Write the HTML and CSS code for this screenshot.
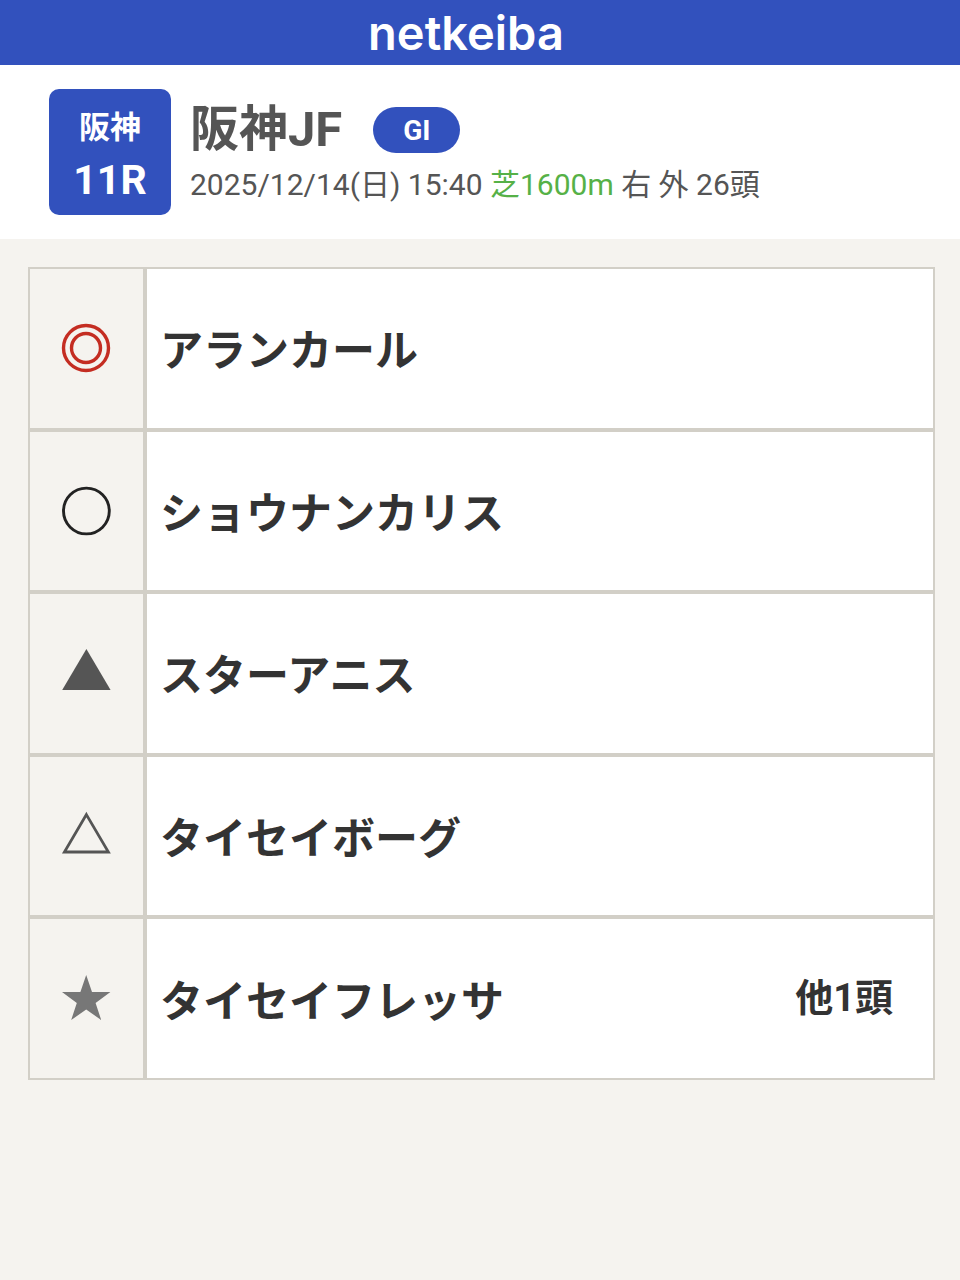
FILE: index.html
```html
<!DOCTYPE html>
<html lang="ja">
<head>
  <meta charset="UTF-8" />
  <meta name="viewport" content="width=device-width, initial-scale=1.0"/>
  <title>阪神JF | netkeiba</title>
  <link rel="stylesheet" href="styles.css">
</head>
<body>
  <header class="site-header">
    <div class="logo">netkeiba</div>
  </header>

  <section class="race">
    <div class="race-num">
      <span class="place">阪神</span>
      <span class="round">11R</span>
    </div>
    <div class="race-info">
      <div class="race-title">
        <h1>阪神JF</h1>
        <span class="grade">GI</span>
      </div>
      <p class="race-data">2025/12/14(日) 15:40 <span class="turf">芝1600m</span> 右 外 26頭</p>
    </div>
  </section>

  <main class="marks">
    <table class="mark-table">
      <tr>
        <th scope="row">
          <svg class="mark" viewBox="0 0 50 50" role="img" aria-label="本命">
            <circle cx="25" cy="25" r="22.5" fill="none" stroke="#c42d22" stroke-width="3.4"/>
            <circle cx="25" cy="25" r="14.5" fill="none" stroke="#c42d22" stroke-width="3.4"/>
          </svg>
        </th>
        <td><div class="horse"><span class="name">アランカール</span></div></td>
      </tr>
      <tr>
        <th scope="row">
          <svg class="mark" viewBox="0 0 50 50" role="img" aria-label="対抗">
            <circle cx="25.4" cy="25" r="22.9" fill="none" stroke="#222" stroke-width="2.9"/>
          </svg>
        </th>
        <td><div class="horse"><span class="name">ショウナンカリス</span></div></td>
      </tr>
      <tr>
        <th scope="row">
          <svg class="mark" viewBox="0 0 50 50" role="img" aria-label="単穴">
            <path d="M25.4 1L49.6 42H1.2Z" fill="#555"/>
          </svg>
        </th>
        <td><div class="horse"><span class="name">スターアニス</span></div></td>
      </tr>
      <tr>
        <th scope="row">
          <svg class="mark" viewBox="0 0 50 50" role="img" aria-label="連下">
            <path d="M25.4 3.6L47.4 41H3.4Z" fill="none" stroke="#555" stroke-width="2.8"/>
          </svg>
        </th>
        <td><div class="horse"><span class="name">タイセイボーグ</span></div></td>
      </tr>
      <tr>
        <th scope="row">
          <svg class="mark" viewBox="0 0 50 50" role="img" aria-label="星">
            <path d="M25.2 1L31 18H49.4L34.6 29L40.2 46L25.2 35.6L10.2 46L15.8 29L1 18H19.4Z" fill="#777"/>
          </svg>
        </th>
        <td>
          <div class="horse">
            <span class="name">タイセイフレッサ</span>
            <span class="others">他1頭</span>
          </div>
        </td>
      </tr>
    </table>
  </main>
</body>
</html>
```
FILE: styles.css
```css
* {
  box-sizing: border-box;
}
body {
  margin: 0;
  background: #f5f3ef;
  color: #333;
  font-family: Roboto, 'Noto Sans CJK JP', sans-serif;
}
.site-header {
  display: flex;
  align-items: center;
  justify-content: center;
  height: 65px;
  padding-right: 28px;
  background: #3251bd;
}
.logo {
  color: #fff;
  font-family: Inter, sans-serif;
  font-size: 47px;
  font-weight: 600;
  line-height: 65px;
}
.race {
  display: flex;
  gap: 19px;
  padding: 24px 49px;
  background: #fff;
  color: #555;
}
.race-num {
  display: flex;
  flex-direction: column;
  align-items: center;
  justify-content: center;
  width: 122px;
  height: 126px;
  padding-top: 4px;
  background: #3251bd;
  border-radius: 10px;
  color: #fff;
  font-weight: 700;
}
.place {
  font-size: 31px;
  line-height: 52px;
}
.round {
  font-size: 41px;
  line-height: 52px;
}
.race-info {
  padding-top: 9px;
}
.race-title {
  display: flex;
  align-items: center;
  gap: 31px;
}
h1 {
  margin: 0;
  font-size: 49px;
  line-height: 64px;
}
.grade {
  padding: 2px 29px 0 30px;
  background: #3251bd;
  border-radius: 23px;
  color: #fff;
  font-size: 28px;
  font-weight: 700;
  line-height: 44px;
}
.race-data {
  margin: 0;
  font-size: 30px;
  line-height: 46px;
}
.turf {
  color: #56b147;
}
.marks {
  padding: 28px 25px 28px 28px;
}
.mark-table {
  width: 100%;
  height: 813px;
  border-spacing: 0;
}
th, td {
  border: 2px solid #d2cfc7;
}
th {
  width: 117px;
  padding: 0 2px 0 0;
}
td {
  padding: 0 40px 2px 13px;
  background: #fff;
}
.mark {
  display: block;
  width: 50px;
  height: 50px;
  margin: 0 auto;
}
.horse {
  display: flex;
  align-items: flex-start;
  justify-content: space-between;
  font-weight: 700;
}
.name {
  font-size: 43px;
}
.others {
  font-size: 38px;
}
```
